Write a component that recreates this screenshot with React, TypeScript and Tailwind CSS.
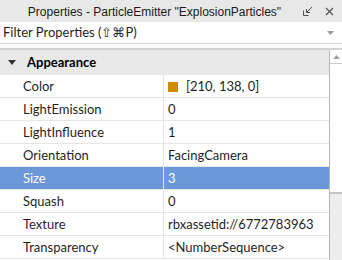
import React from 'react'

const rows: { name: string; value: string; swatch?: string }[] = [
  { name: 'Color', value: '[210, 138, 0]', swatch: '#d28a00' },
  { name: 'LightEmission', value: '0' },
  { name: 'LightInfluence', value: '1' },
  { name: 'Orientation', value: 'FacingCamera' },
  { name: 'Size', value: '3' },
  { name: 'Squash', value: '0' },
  { name: 'Texture', value: 'rbxassetid://6772783963' },
  { name: 'Transparency', value: '<NumberSequence>' },
]

const selected = 'Size'

export default function App() {
  return (
    <div className="w-[342px] h-[260px] overflow-hidden bg-white text-[#1f1f1f] flex flex-col" style={{ fontFamily: 'Lato, "Noto Sans", sans-serif' }}>
      {/* title bar */}
      <div className="h-[22px] shrink-0 bg-[#e8e8e8] flex items-center">
        <div className="flex-1 text-center text-[12px] text-[#1a1a1a] pl-[16px] pt-[1px]" style={{ fontFamily: '"Liberation Sans", Arial, sans-serif' }}>
          Properties - ParticleEmitter "ExplosionParticles"
        </div>
        <div className="flex items-center gap-[12px] pr-[8px] pl-[10px]">
          <svg width="10" height="10" viewBox="0 0 10 10" fill="none" stroke="#555" strokeWidth="1">
            <path d="M0.5 4.5v5h5" />
            <path d="M9 1L3.5 6.5M3.5 3v3.5H7" />
          </svg>
          <svg width="9" height="9" viewBox="0 0 9 9" stroke="#555" strokeWidth="1.2">
            <path d="M1 1l7 7M8 1L1 8" />
          </svg>
        </div>
      </div>
      {/* filter */}
      <div className="h-[22px] shrink-0 flex items-center justify-between border-b border-[#dcdcdc] pl-[3px] pr-[8px]">
        <span className="text-[13px] pt-[1px]">Filter Properties (⇧⌘P)</span>
        <svg width="7" height="4" viewBox="0 0 7 4">
          <path d="M0 0h7L3.5 4z" fill="#9a9a9a" />
        </svg>
      </div>
      <div className="h-[6px] shrink-0 border-b-2 border-[#d2d2d2]" />
      {/* table */}
      <div className="flex-1 flex min-h-0">
        <div className="flex-1 flex flex-col">
          <div className="h-[25px] shrink-0 bg-[#e8e8e8] flex items-center">
            <svg width="8" height="5" viewBox="0 0 8 5" className="ml-[8px]">
              <path d="M0 0h8L4 5z" fill="#333" />
            </svg>
            <span className="ml-[11px] text-[13px] font-bold text-black">Appearance</span>
          </div>
          {rows.map(r => {
            const sel = r.name === selected
            return (
              <div key={r.name} className={`h-[23px] shrink-0 flex border-b border-[#e6e6e6] text-[13px] ${sel ? 'bg-[#6a98d8] text-white' : ''}`}>
                <div className={`w-[164px] shrink-0 pl-[23px] pt-[1px] flex items-center border-r ${sel ? 'border-[#e0e8f5]' : 'border-[#e6e6e6]'}`}>{r.name}</div>
                <div className="flex-1 pl-[4px] pt-[1px] flex items-center">
                  {r.swatch && <span className="w-[10px] h-[10px] mr-[8px]" style={{ background: r.swatch }} />}
                  {r.value}
                </div>
              </div>
            )
          })}
        </div>
        {/* scrollbar */}
        <div className="w-[13px] shrink-0 border-l border-[#b8b8b8] flex flex-col">
          <div className="h-[14px] border-b border-[#d0d0d0] flex items-center justify-center">
            <svg width="7" height="4" viewBox="0 0 7 4">
              <path d="M3.5 0L7 4H0z" fill="#a0a0a0" />
            </svg>
          </div>
          <div className="h-[128px]" />
          <div className="flex-1 bg-[#ededed] border-t-2 border-[#c4c4c4]" />
        </div>
      </div>
    </div>
  )
}
